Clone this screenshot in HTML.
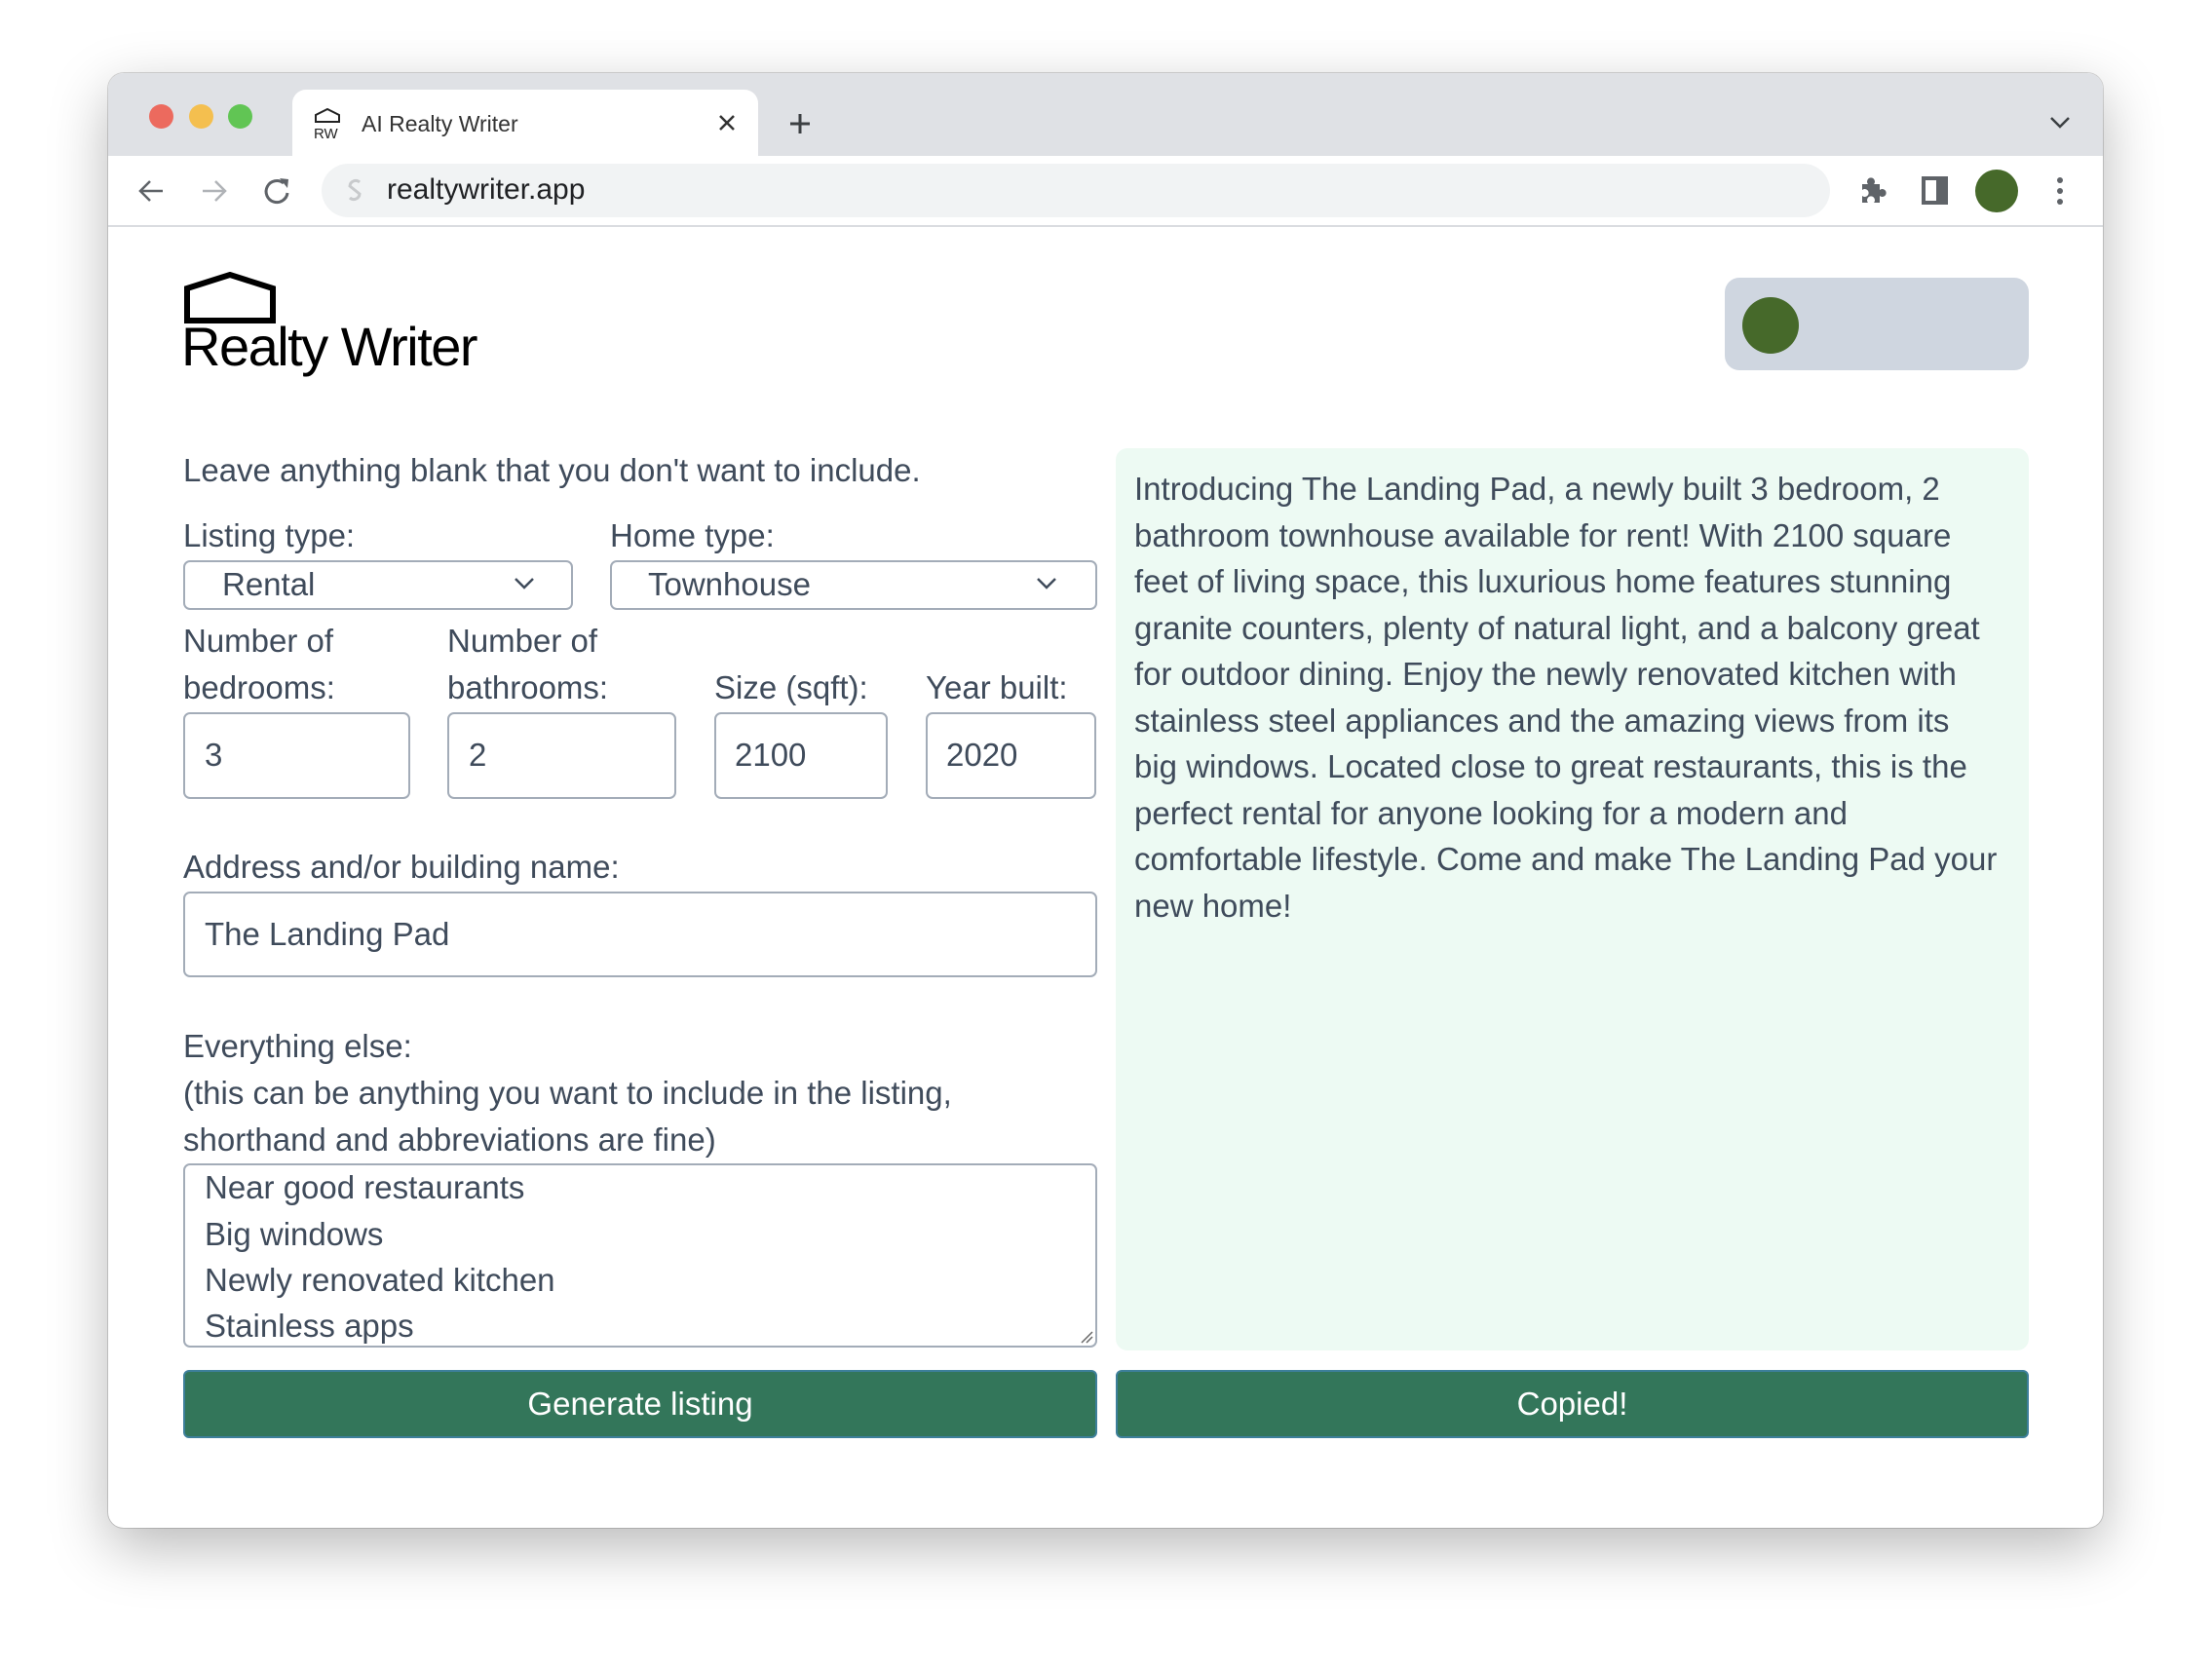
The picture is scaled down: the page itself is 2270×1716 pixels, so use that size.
<!DOCTYPE html>
<html><head><meta charset="utf-8"><style>
*{box-sizing:border-box;margin:0;padding:0}
body{width:2270px;height:1716px;background:#fff;position:relative;overflow:hidden;font-family:"Liberation Sans",Arial,sans-serif;color:#3f4b5b}
.win{position:absolute;left:111px;top:75px;width:2047px;height:1493px;border-radius:16px;background:#fff;box-shadow:0 20px 60px rgba(0,0,0,.28),0 0 0 1px rgba(0,0,0,.15);overflow:hidden}
.abs{position:absolute}
.tabs{left:0;top:0;width:100%;height:85px;background:#dfe1e5}
.dot{width:25px;height:25px;border-radius:50%;top:32px}
.tab{left:189px;top:17px;width:478px;height:70px;background:#fff;border-radius:14px 14px 0 0}
.toolbar{left:0;top:85px;width:100%;height:73px;background:#fff;border-bottom:2px solid #dadce0}
.url{left:219px;top:93px;width:1548px;height:55px;background:#f1f3f4;border-radius:28px}
.t{position:absolute;white-space:nowrap;font-size:33px;line-height:38px}
.box{position:absolute;border:2px solid #a3acb8;border-radius:7px;background:#fff}
.btn{position:absolute;height:70px;background:#33765a;border:2px solid #3d7f9a;border-radius:6px;color:#fff;font-size:33px;text-align:center;line-height:66px}
</style></head><body>
<div class="win">
 <div class="abs tabs"></div>
 <div class="abs dot" style="left:42px;background:#ec6a5e"></div>
 <div class="abs dot" style="left:83px;background:#f4bf4f"></div>
 <div class="abs dot" style="left:123px;background:#61c554"></div>
 <div class="abs tab"></div>
 <svg class="abs" style="left:210px;top:36px" width="30" height="32" viewBox="0 0 30 32"><path d="M3 14V7L15 1L27 7V14Z" fill="none" stroke="#222" stroke-width="2"/><text x="1" y="31" font-size="15" font-family="Liberation Sans" fill="#222">RW</text></svg>
 <div class="t" style="left:260px;top:38px;font-size:23px;line-height:28px;color:#333">AI Realty Writer</div>
 <svg class="abs" style="left:626px;top:42px" width="18" height="18"><path d="M2 2L16 16M16 2L2 16" stroke="#333" stroke-width="2.5"/></svg>
 <svg class="abs" style="left:698px;top:40px" width="24" height="24"><path d="M12 2V22M2 12H22" stroke="#3c4043" stroke-width="3"/></svg>
 <svg class="abs" style="left:1992px;top:44px" width="22" height="14"><path d="M2 2L11 11L20 2" fill="none" stroke="#3c4043" stroke-width="2.5"/></svg>
 <div class="abs toolbar"></div>
 <svg class="abs" style="left:30px;top:106px" width="28" height="30"><path d="M26 15H4M13 5L3 15L13 25" fill="none" stroke="#5f6368" stroke-width="2.5"/></svg>
 <svg class="abs" style="left:95px;top:106px" width="28" height="30"><path d="M2 15H24M15 5L25 15L15 25" fill="none" stroke="#b0b3b7" stroke-width="2.5"/></svg>
 <svg class="abs" style="left:159px;top:106px" width="30" height="30"><path d="M25 17A11 11 0 1 1 21 7" fill="none" stroke="#5f6368" stroke-width="3"/><path d="M17 2L26 3L25 12Z" fill="#5f6368"/></svg>
 <div class="abs url"></div>
 <svg class="abs" style="left:244px;top:106px" width="18" height="28"><path d="M14 6A6 6 0 0 0 4 10L14 18A6 6 0 0 1 4 22" fill="none" stroke="#c8cacc" stroke-width="3"/></svg>
 <div class="t" style="left:286px;top:102px;font-size:30px;line-height:36px;color:#202124">realtywriter.app</div>
 <svg class="abs" style="left:1797px;top:106px" width="28" height="30" viewBox="0 0 28 30"><path d="M3 8H9A4 4 0 1 1 15 8H21V14A4 4 0 1 1 21 20V27H15A4 4 0 1 0 9 27H3V20A4 4 0 1 0 3 14Z" fill="#5f6368"/></svg>
 <svg class="abs" style="left:1861px;top:106px" width="28" height="30"><rect x="2" y="2" width="23" height="25" fill="none" stroke="#5f6368" stroke-width="4"/><rect x="15" y="2" width="10" height="25" fill="#5f6368"/></svg>
 <div class="abs" style="left:1916px;top:99px;width:44px;height:44px;border-radius:50%;background:#46692a"></div>
 <svg class="abs" style="left:1998px;top:106px" width="10" height="30"><circle cx="5" cy="4" r="3" fill="#5f6368"/><circle cx="5" cy="15" r="3" fill="#5f6368"/><circle cx="5" cy="26" r="3" fill="#5f6368"/></svg>

 <!-- page -->
 <svg class="abs" style="left:77px;top:204px" width="96" height="53"><path d="M4 50V17L48 3L92 17V50Z" fill="none" stroke="#000" stroke-width="6"/></svg>
 <div class="t" style="left:75px;top:249px;font-size:56px;line-height:64px;color:#000;letter-spacing:-1.5px">Realty Writer</div>
 <div class="abs" style="left:1659px;top:210px;width:312px;height:95px;border-radius:15px;background:#cfd6e0"></div>
 <div class="abs" style="left:1677px;top:230px;width:58px;height:58px;border-radius:50%;background:#46692a"></div>

 <div class="t" style="left:77px;top:389px">Leave anything blank that you don't want to include.</div>
 <div class="t" style="left:77px;top:456px">Listing type:</div>
 <div class="t" style="left:515px;top:456px">Home type:</div>
 <div class="box" style="left:77px;top:500px;width:400px;height:51px"></div>
 <div class="t" style="left:117px;top:506px">Rental</div>
 <svg class="abs" style="left:416px;top:517px" width="22" height="14"><path d="M2 2L11 11L20 2" fill="none" stroke="#3f4b5b" stroke-width="2.5"/></svg>
 <div class="box" style="left:515px;top:500px;width:500px;height:51px"></div>
 <div class="t" style="left:554px;top:506px">Townhouse</div>
 <svg class="abs" style="left:952px;top:517px" width="22" height="14"><path d="M2 2L11 11L20 2" fill="none" stroke="#3f4b5b" stroke-width="2.5"/></svg>

 <div class="t" style="left:77px;top:564px">Number of</div>
 <div class="t" style="left:77px;top:612px">bedrooms:</div>
 <div class="t" style="left:348px;top:564px">Number of</div>
 <div class="t" style="left:348px;top:612px">bathrooms:</div>
 <div class="t" style="left:622px;top:612px">Size (sqft):</div>
 <div class="t" style="left:839px;top:612px">Year built:</div>
 <div class="box" style="left:77px;top:656px;width:233px;height:89px"></div>
 <div class="box" style="left:348px;top:656px;width:235px;height:89px"></div>
 <div class="box" style="left:622px;top:656px;width:178px;height:89px"></div>
 <div class="box" style="left:839px;top:656px;width:175px;height:89px"></div>
 <div class="t" style="left:99px;top:681px">3</div>
 <div class="t" style="left:370px;top:681px">2</div>
 <div class="t" style="left:643px;top:681px">2100</div>
 <div class="t" style="left:860px;top:681px">2020</div>

 <div class="t" style="left:77px;top:796px">Address and/or building name:</div>
 <div class="box" style="left:77px;top:840px;width:938px;height:88px"></div>
 <div class="t" style="left:99px;top:865px">The Landing Pad</div>

 <div class="t" style="left:77px;top:980px">Everything else:</div>
 <div class="t" style="left:77px;top:1028px">(this can be anything you want to include in the listing,</div>
 <div class="t" style="left:77px;top:1076px">shorthand and abbreviations are fine)</div>
 <div class="box" style="left:77px;top:1119px;width:938px;height:189px"></div>
 <div class="t" style="left:99px;top:1125px">Near good restaurants</div>
 <div class="t" style="left:99px;top:1173px">Big windows</div>
 <div class="t" style="left:99px;top:1220px">Newly renovated kitchen</div>
 <div class="t" style="left:99px;top:1267px">Stainless apps</div>
 <svg class="abs" style="left:997px;top:1290px" width="14" height="14"><path d="M2 13L13 2M7 13L13 7" stroke="#666" stroke-width="1.5"/></svg>

 <div class="abs" style="left:1034px;top:385px;width:937px;height:926px;border-radius:12px;background:#edfaf3"></div>
 <div class="t" style="left:1053px;top:403px;line-height:47.5px">Introducing The Landing Pad, a newly built 3 bedroom, 2<br>bathroom townhouse available for rent! With 2100 square<br>feet of living space, this luxurious home features stunning<br>granite counters, plenty of natural light, and a balcony great<br>for outdoor dining. Enjoy the newly renovated kitchen with<br>stainless steel appliances and the amazing views from its<br>big windows. Located close to great restaurants, this is the<br>perfect rental for anyone looking for a modern and<br>comfortable lifestyle. Come and make The Landing Pad your<br>new home!</div>

 <div class="btn" style="left:77px;top:1331px;width:938px">Generate listing</div>
 <div class="btn" style="left:1034px;top:1331px;width:937px">Copied!</div>
</div>
</body></html>
